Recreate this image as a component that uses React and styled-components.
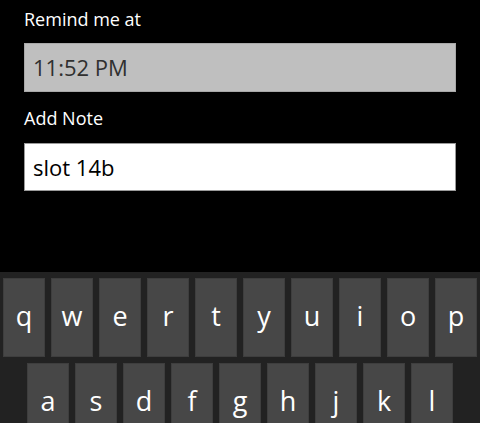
import React from "react";
import styled, { createGlobalStyle } from "styled-components";

const Global = createGlobalStyle`
  html, body { margin: 0; padding: 0; background: #000; overflow: hidden; }
  body { font-family: "Open Sans", "Noto Sans", sans-serif; }
`;

const Screen = styled.div`
  width: 480px;
  height: 423px;
  background: #000;
  display: flex;
  flex-direction: column;
  overflow: hidden;
`;

const Form = styled.div`
  display: flex;
  flex-direction: column;
  padding: 8px 24px 0;
`;

const Label = styled.div`
  color: #fff;
  font-size: 18px;
  line-height: 22px;
  height: 22px;
  margin-top: ${(p) => p.$top || 0}px;
  margin-bottom: ${(p) => p.$bottom || 0}px;
  white-space: nowrap;
`;

const Box = styled.div`
  box-sizing: border-box;
  height: ${(p) => p.$h}px;
  line-height: ${(p) => p.$h - 2}px;
  border: 1px solid ${(p) => (p.$filled ? "#a8a8a8" : "#9a9a9a")};
  background: ${(p) => (p.$filled ? "#bfbfbf" : "#ffffff")};
  color: ${(p) => (p.$filled ? "#303030" : "#000")};
  font-size: 22px;
  padding: 0 8px;
  white-space: nowrap;
`;

const Keyboard = styled.div`
  margin-top: 81px;
  flex: 1;
  background: #222222;
  padding: 6px 3px 0;
  display: flex;
  flex-direction: column;
  gap: 6px;
  overflow: hidden;
`;

const Row = styled.div`
  display: flex;
  gap: 6px;
  padding-left: ${(p) => p.$indent || 0}px;
`;

const Key = styled.div`
  flex: none;
  width: 42px;
  height: 79px;
  box-sizing: border-box;
  background: #474747;
  border: 1px solid #3e3e3e;
  color: #fff;
  font-size: 27px;
  display: flex;
  align-items: center;
  justify-content: center;
  padding-bottom: 5px;
`;

const row1 = ["q", "w", "e", "r", "t", "y", "u", "i", "o", "p"];
const row2 = ["a", "s", "d", "f", "g", "h", "j", "k", "l"];

export default function App() {
  return (
    <Screen>
      <Global />
      <Form>
        <Label $bottom={13}>Remind me at</Label>
        <Box $h={49} $filled>11:52 PM</Box>
        <Label $top={15} $bottom={14}>Add Note</Label>
        <Box $h={48}>slot 14b</Box>
      </Form>
      <Keyboard>
        <Row>
          {row1.map((k) => (
            <Key key={k}>{k}</Key>
          ))}
        </Row>
        <Row $indent={24}>
          {row2.map((k) => (
            <Key key={k}>{k}</Key>
          ))}
        </Row>
      </Keyboard>
    </Screen>
  );
}
